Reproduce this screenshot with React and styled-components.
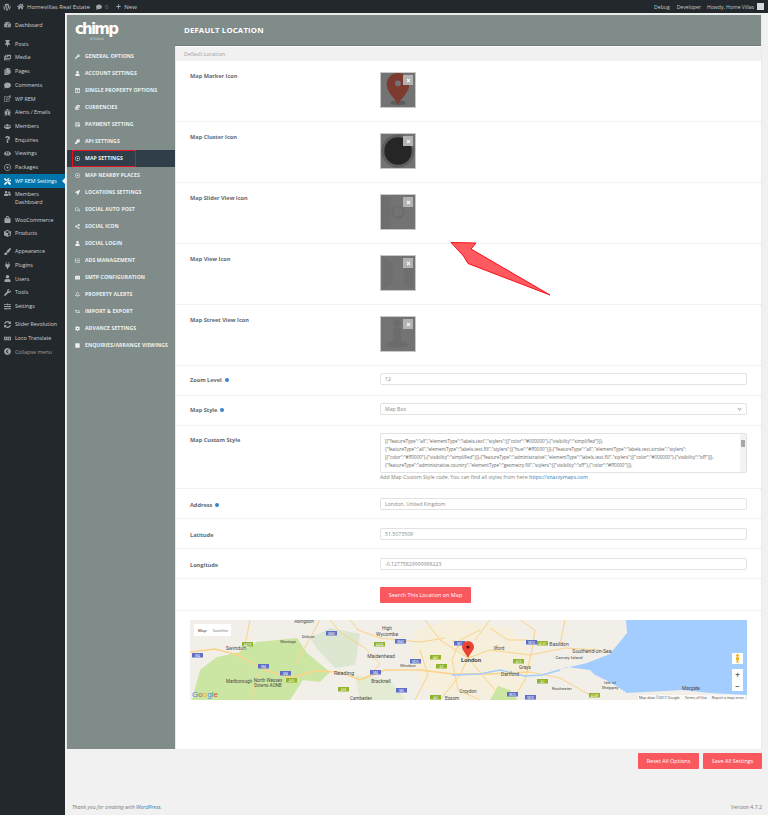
import React from 'react';
import styled, { createGlobalStyle } from 'styled-components';
import {
  FaWordpress, FaHome, FaComment, FaPlus, FaTachometerAlt, FaThumbtack, FaImages, FaCopy,
  FaRegEdit, FaBug, FaUsers, FaQuestion, FaEye, FaRegDotCircle, FaTools, FaUserFriends,
  FaShoppingBag, FaCube, FaPaintBrush, FaPlug, FaUser, FaWrench, FaSlidersH, FaSyncAlt,
  FaLanguage, FaChevronCircleLeft, FaKey, FaColumns, FaCoins, FaSquare, FaCog,
  FaLocationArrow, FaRegComments, FaShareAlt, FaList, FaEnvelope, FaRegBell, FaRetweet, FaCreditCard, FaTimes,
} from 'react-icons/fa';

const GlobalStyle = createGlobalStyle`
  html, body { margin: 0; padding: 0; background: #f1f1f1; }
  body { font-family: "Open Sans", "Liberation Sans", sans-serif; overflow: hidden; }
  * { box-sizing: border-box; }
`;

const Page = styled.div`
  position: relative;
  width: 768px;
  height: 815px;
  overflow: hidden;
`;

const AdminBar = styled.header`
  display: flex;
  align-items: center;
  height: 13px;
  padding: 0 4px 0 3px;
  background: #23282d;
  color: #c6c9cb;
  font-size: 6px;
`;

const BarItem = styled.span`
  display: flex;
  align-items: center;
  gap: 3px;
  margin-left: ${p => p.$gap || 0}px;
  svg { color: #a0a5aa; }
`;

const BarCount = styled.span`
  opacity: 0.5;
`;

const BarRight = styled.div`
  display: flex;
  align-items: center;
  margin-left: auto;
  font-size: 5.1px;
`;

const Avatar = styled.span`
  width: 7px;
  height: 7px;
  margin-left: 0;
  background: #d8d8d8;
`;

const Shell = styled.div`
  display: flex;
  height: 802px;
`;

const Sidebar = styled.nav`
  flex: 0 0 65px;
  padding-top: 5px;
  background: #23282d;
`;

const SideItem = styled.div`
  position: relative;
  display: flex;
  align-items: ${p => (p.$tall ? 'flex-start' : 'center')};
  gap: 4px;
  height: ${p => (p.$tall ? 20 : 13.72)}px;
  margin-top: ${p => p.$top || 0}px;
  padding: ${p => (p.$tall ? '2px' : 0)} 0 0 4px;
  background: ${p => (p.$active ? '#0073aa' : 'transparent')};
  color: ${p => (p.$active ? '#fff' : p.$dim ? '#9a9fa4' : '#d0d2d4')};
  font-size: 5.35px;
  line-height: 8.5px;
  svg { flex: 0 0 7px; color: ${p => (p.$active ? '#fff' : '#a0a5aa')}; }
`;

const SideNotch = styled.span`
  position: absolute;
  right: 0;
  top: 3.5px;
  border: 3.5px solid transparent;
  border-right-color: #f1f1f1;
  border-left: 0;
`;

const Main = styled.main`
  flex: 1;
  display: flex;
  flex-direction: column;
  padding: 0 6px 0 1px;
`;

const Panel = styled.div`
  display: flex;
  height: 736px;
  padding: 2px 1px 0;
  background: #e9eaea;
`;

const OptionsNav = styled.aside`
  flex: 0 0 108px;
  margin-right: 1px;
  background: #7f8c8a;
`;

const LogoBox = styled.div`
  position: relative;
  height: 32px;
  padding: 8px 0 0 8px;
  color: #fff;
  font-family: "DejaVu Sans", sans-serif;
  font-size: 15px;
  font-weight: 700;
  line-height: 13px;
  letter-spacing: -1.8px;
  small {
    position: absolute;
    left: 23px;
    top: 21.5px;
    color: #dfe4e3;
    font-size: 3px;
    font-weight: 400;
    line-height: 4px;
    letter-spacing: 0.4px;
  }
`;

const NavItem = styled.div`
  position: relative;
  display: flex;
  align-items: center;
  gap: 5px;
  height: 17px;
  padding-left: 8px;
  background: ${p => (p.$active ? '#2f3e48' : 'transparent')};
  color: #eff2f1;
  font-size: 5.1px;
  font-weight: 700;
  letter-spacing: 0.1px;
  text-transform: uppercase;
  svg { flex: 0 0 5px; }
`;

const NavList = styled.div`
  padding-top: 0.5px;
`;

const RedBox = styled.span`
  position: absolute;
  left: 5px;
  top: 0;
  width: 64px;
  height: 17px;
  border: 1.5px solid #e8101c;
`;

const Content = styled.section`
  flex: 1;
  min-width: 0;
  display: flex;
  flex-direction: column;
  background: #fff;
`;

const Header = styled.div`
  display: flex;
  align-items: center;
  height: 31px;
  margin-left: -1px;
  padding-left: 9px;
  background: #7f8c8a;
  border-bottom: 1px solid #6f7b79;
  color: #fff;
  font-size: 7.8px;
  font-weight: 700;
  letter-spacing: 0.15px;
`;

const Crumb = styled.div`
  display: flex;
  align-items: center;
  height: 14px;
  margin-top: 1px;
  padding-left: 8px;
  background: #f1f1f1;
  color: #a0a0a0;
  font-size: 5.4px;
`;

const Row = styled.div`
  display: grid;
  grid-template-columns: 190px 367px;
  height: ${p => p.$h}px;
  padding: ${p => p.$pt}px 0 0 14px;
  border-bottom: 1px dotted #e8e8e8;
`;

const Label = styled.label`
  display: flex;
  align-items: flex-start;
  gap: 2px;
  padding-top: ${p => p.$pt || 0}px;
  color: #66696c;
  font-size: 5.6px;
  line-height: 8px;
  font-weight: 700;
`;

const Help = styled.span`
  width: 4px;
  height: 4px;
  margin: 2px 0 0 1px;
  border-radius: 50%;
  background: #3d82c4;
`;

const IconThumb = styled.div`
  position: relative;
  width: 36px;
  height: 36px;
  overflow: hidden;
  border: 1px solid #c9c9c9;
  background: #737373;
  svg.art { display: block; width: 100%; height: 100%; }
`;

const RemoveBtn = styled.span`
  position: absolute;
  top: 2px;
  right: 2px;
  display: flex;
  align-items: center;
  justify-content: center;
  width: 10px;
  height: 10px;
  background: #b3b3b3;
  color: #fff;
`;

const Input = styled.div`
  display: flex;
  align-items: center;
  justify-content: space-between;
  height: 12px;
  padding: 0 5px 0 4px;
  border: 1px solid #e2e2e2;
  border-radius: 2px;
  color: #8a8a8a;
  font-size: 5.2px;
`;

const Chevron = styled.span`
  width: 3px;
  height: 3px;
  margin-top: -2px;
  border-right: 1px solid #aaa;
  border-bottom: 1px solid #aaa;
  transform: rotate(45deg);
`;

const TextBox = styled.div`
  position: relative;
  height: 40px;
  overflow: hidden;
  padding: 3px 8px 0 4px;
  border: 1px solid #e2e2e2;
  border-radius: 2px;
  color: #666;
  font-size: 4.55px;
  line-height: 8px;
  white-space: nowrap;
`;

const FakeScroll = styled.div`
  position: absolute;
  top: 0;
  right: 0;
  bottom: 0;
  width: 6px;
  background: #f3f3f3;
  &::before {
    content: '';
    position: absolute;
    top: 6px;
    left: 1px;
    width: 4px;
    height: 7px;
    background: #a6a6a6;
  }
`;

const Hint = styled.div`
  margin-top: 0;
  color: #808080;
  font-size: 5.2px;
  line-height: 8px;
  a { color: #2b7cba; text-decoration: none; }
`;

const PrimaryButton = styled.button`
  flex: none;
  height: 16px;
  width: ${p => p.$w}px;
  padding: 0;
  border: 0;
  border-radius: 1px;
  background: #f9585e;
  color: #fff;
  font-family: inherit;
  font-size: 5.5px;
  font-weight: 400;
`;

const ButtonRow = styled.div`
  display: flex;
  height: 32px;
  padding: 8px 0 0 204px;
  border-bottom: 1px dotted #e8e8e8;
`;

const MapWrap = styled.div`
  position: relative;
  width: 557px;
  height: 80px;
  margin: 9px 0 0 14px;
  overflow: hidden;
  svg.map { display: block; }
`;

const MapType = styled.div`
  position: absolute;
  top: 4px;
  left: 4px;
  display: flex;
  align-items: center;
  gap: 6px;
  height: 12px;
  padding: 0 3px 0 4px;
  background: #fff;
  color: #777;
  font-size: 4.2px;
  b { color: #222; font-weight: 400; }
`;

const Pegman = styled.div`
  position: absolute;
  top: 33px;
  right: 4px;
  display: flex;
  justify-content: center;
  align-items: center;
  width: 11px;
  height: 11px;
  background: #fff;
`;

const ZoomControl = styled.div`
  position: absolute;
  top: 49px;
  right: 4px;
  display: flex;
  flex-direction: column;
  width: 11px;
  height: 22px;
  background: #fff;
  color: #666;
  font-size: 8px;
  font-weight: 700;
  line-height: 11px;
  text-align: center;
`;

const Attribution = styled.div`
  position: absolute;
  right: 2px;
  bottom: 0;
  display: flex;
  gap: 5px;
  padding: 0 1px;
  background: rgba(255, 255, 255, 0.7);
  color: #444;
  font-size: 3.6px;
  line-height: 5px;
`;

const GoogleMark = styled.div`
  position: absolute;
  left: 2px;
  bottom: 1px;
  font-family: "Liberation Sans", sans-serif;
  font-size: 8px;
  line-height: 9px;
  span:nth-child(1), span:nth-child(4) { color: #4a8af4; }
  span:nth-child(2), span:nth-child(6) { color: #e8453c; }
  span:nth-child(3) { color: #f5b400; }
  span:nth-child(5) { color: #34a853; }
`;

const Actions = styled.div`
  display: flex;
  justify-content: flex-end;
  gap: 4px;
  padding-top: 4px;
`;

const Footer = styled.footer`
  display: flex;
  justify-content: space-between;
  margin-top: 34px;
  padding-left: 6px;
  color: #777;
  font-size: 5.2px;
  font-style: italic;
  line-height: 8px;
  a { color: #2b7cba; text-decoration: none; }
  span { font-style: normal; }
`;

const ArrowMark = styled.svg`
  position: absolute;
  left: 445px;
  top: 236px;
`;

const sideItems = [
  { label: 'Dashboard', icon: FaTachometerAlt },
  { label: 'Posts', icon: FaThumbtack, top: 5.3 },
  { label: 'Media', icon: FaImages },
  { label: 'Pages', icon: FaCopy },
  { label: 'Comments', icon: FaComment },
  { label: 'WP REM', icon: FaRegEdit },
  { label: 'Alerts / Emails', icon: FaBug },
  { label: 'Members', icon: FaUsers },
  { label: 'Enquiries', icon: FaQuestion },
  { label: 'Viewings', icon: FaEye },
  { label: 'Packages', icon: FaRegDotCircle },
  { label: 'WP REM Settings', icon: FaTools, active: true },
  { label: <>Members<br />Dashboard</>, icon: FaUserFriends, tall: true },
  { label: 'WooCommerce', icon: FaShoppingBag, top: 5 },
  { label: 'Products', icon: FaCube },
  { label: 'Appearance', icon: FaPaintBrush, top: 4.3 },
  { label: 'Plugins', icon: FaPlug },
  { label: 'Users', icon: FaUser },
  { label: 'Tools', icon: FaWrench },
  { label: 'Settings', icon: FaSlidersH },
  { label: 'Slider Revolution', icon: FaSyncAlt, top: 4.3 },
  { label: 'Loco Translate', icon: FaLanguage },
  { label: 'Collapse menu', icon: FaChevronCircleLeft, dim: true },
];

const navItems = [
  ['General Options', FaWrench],
  ['Account Settings', FaUser],
  ['Single Property Options', FaColumns],
  ['Currencies', FaCoins],
  ['Payment Setting', FaCreditCard],
  ['API Settings', FaKey],
  ['Map Settings', FaRegDotCircle, true],
  ['Map Nearby Places', FaRegDotCircle],
  ['Locations Settings', FaLocationArrow],
  ['Social Auto Post', FaRegComments],
  ['Social Icon', FaShareAlt],
  ['Social Login', FaUser],
  ['Ads Management', FaList],
  ['SMTP Configuration', FaEnvelope],
  ['Property Alerts', FaRegBell],
  ['Import & Export', FaRetweet],
  ['Advance Settings', FaCog],
  ['Enquiries/Arrange Viewings', FaSquare],
];

const styleLines = [
  '[{"featureType":"all","elementType":"labels.text","stylers":[{"color":"#000000"},{"visibility":"simplified"}]},',
  '{"featureType":"all","elementType":"labels.text.fill","stylers":[{"hue":"#ff0000"}]},{"featureType":"all","elementType":"labels.text.stroke","stylers":',
  '[{"color":"#ff0000"},{"visibility":"simplified"}]},{"featureType":"administrative","elementType":"labels.text.fill","stylers":[{"color":"#000000"},{"visibility":"off"}]},',
  '{"featureType":"administrative.country","elementType":"geometry.fill","stylers":[{"visibility":"off"},{"color":"#ff0000"}]},',
];

const thumbArt = {
  marker: (
    <svg className="art" viewBox="0 0 36 36">
      <ellipse cx="18" cy="31.5" rx="8" ry="2.5" fill="#5d5d5d" />
      <path d="M18 33 C13 25 6 20 6 12 A12 12 0 0 1 30 12 C30 20 23 25 18 33Z" fill="#7d3a2e" />
      <circle cx="18" cy="11" r="3" fill="#757575" />
    </svg>
  ),
  cluster: (
    <svg className="art" viewBox="0 0 36 36">
      <circle cx="18" cy="18" r="17.5" fill="#5e5e5e" />
      <circle cx="18" cy="18" r="14.5" fill="#262626" />
    </svg>
  ),
  slider: (
    <svg className="art" viewBox="0 0 36 36">
      <path d="M0 2 H10 V36 H0Z" fill="#6e6e6e" />
      <circle cx="18" cy="18" r="6" fill="none" stroke="#6a6a6a" strokeWidth="1.5" />
    </svg>
  ),
  view: (
    <svg className="art" viewBox="0 0 36 36">
      <path d="M2 2 L12 6 V30 L2 34Z M24 6 L34 2 V34 L24 30Z" fill="#6e6e6e" />
    </svg>
  ),
  street: (
    <svg className="art" viewBox="0 0 36 36">
      <circle cx="17" cy="7" r="4" fill="#6c6c6c" />
      <path d="M13 12 H21 V26 H13Z" fill="#6c6c6c" />
      <ellipse cx="17" cy="29" rx="12" ry="3.5" fill="#6b6b6b" />
    </svg>
  ),
};

const iconRows = [
  ['Map Marker Icon', 'marker'],
  ['Map Cluster Icon', 'cluster'],
  ['Map Slider View Icon', 'slider'],
  ['Map View Icon', 'view'],
  ['Map Street View Icon', 'street'],
];

const mapLabels = [
  ['Abingdon', 114, 3, 4.6], ['Didcot', 118, 18, 4.4], ['High', 197, 10, 4.8], ['Wycombe', 197, 16, 5],
  ['Wantage', 98, 23, 4.1], ['Swindon', 46, 30, 5.4], ['Maidenhead', 191, 38, 5], ['Windsor', 218, 47, 4.4],
  ['Reading', 154, 55, 5.6], ['Bracknell', 191, 63, 4.8], ['Marlborough', 49, 63, 4.6],
  ['North Wessex', 78, 62, 4.6], ['Downs AONB', 78, 67, 4.6], ['London', 281, 42, 6, true],
  ['Ilford', 309, 30, 4.6], ['Basildon', 369, 26, 5], ['Southend-on-Sea', 402, 33, 5.2],
  ['Canvey Island', 379, 39, 4.4], ['Grays', 335, 49, 4.8], ['Dartford', 320, 56, 4.8],
  ['Rochester', 372, 70, 4.4], ['Isle of', 420, 64, 4.4], ['Sheppey', 420, 69, 4.4], ['Margate', 501, 70, 4.8],
  ['Croydon', 278, 73, 4.6], ['Camberley', 171, 79.5, 4.6], ['Epsom', 262, 79.5, 4.6],
];

const badges = [
  [136, 11, 'M40', '#5f70c4'], [52, 22, 'A419', '#90b42e'], [2, 33, 'M4', '#5f70c4'], [184, 22, 'A404', '#90b42e'],
  [205, 19, 'M40', '#5f70c4'], [264, 21, 'M1', '#5f70c4'], [240, 35, 'A41', '#90b42e'], [220, 39, 'M25', '#5f70c4'],
  [68, 44, 'M4', '#5f70c4'], [90, 51, 'M4', '#5f70c4'], [96, 58, 'A33', '#90b42e'], [180, 50, 'M4', '#5f70c4'],
  [148, 67, 'A33', '#90b42e'], [206, 68, 'M3', '#5f70c4'], [246, 44, 'A2', '#90b42e'], [336, 20, 'M25', '#5f70c4'],
  [347, 21, 'A127', '#90b42e'], [323, 39, 'A13', '#90b42e'], [347, 59, 'A2', '#90b42e'], [317, 72, 'M25', '#5f70c4'],
  [335, 75, 'M20', '#5f70c4'], [399, 73, 'A249', '#90b42e'], [240, 75, 'A3', '#90b42e'],
];

const roads = [
  'M0 32 L25 29 L48 35 L75 50 L100 58 L125 51 L150 52 L170 60 L195 50 L230 50 L262 54 L300 54 L340 52',
  'M60 0 L55 25 L48 35',
  'M140 0 L150 12 L175 28 L190 44 L180 55 L170 60',
  'M160 0 L168 10 L190 18 L230 22 L255 18',
  'M290 10 L270 20 L262 40 L268 70 L290 80',
  'M330 0 L345 10 L342 30 L335 60 L322 80',
  'M300 30 L340 35 L375 28 L410 30',
  'M340 52 L370 58 L400 75',
  'M230 30 L238 55 L225 80',
  'M300 8 L318 20 L338 20',
  'M60 80 L70 52 M130 0 L120 18 L105 45',
  'M235 0 L250 20 L278 38 L300 30 M250 80 L270 55 L278 38 L262 20 M278 38 L305 70',
  'M375 0 L370 25 M300 0 L285 20',
];

function MapPicture() {
  return (
    <svg className="map" width="557" height="80" viewBox="0 0 557 80" fontFamily="Roboto, sans-serif">
      <rect width="557" height="80" fill="#f2efe8" />
      <path d="M2 80 L10 50 L27 37 L50 32 L67 22 L107 18 L117 33 L140 52 L130 62 L113 60 L100 80Z" fill="#cbe6a3" />
      <path d="M120 18 L140 8 L170 14 L165 45 L145 48 L128 30Z" fill="#dce6d1" />
      <path d="M225 10 L260 0 L320 8 L345 40 L330 75 L280 80 L235 70 L222 40Z" fill="#f5efdb" />
      <path d="M165 55 L200 60 L215 80 H170Z" fill="#e3ecd3" />
      <path d="M300 80 L308 66 L320 70 L328 80Z" fill="#cbe6a3" />
      {roads.map((d, i) => (
        <path key={i} d={d} fill="none" stroke="#fbd38a" strokeWidth={i === 0 ? 1.5 : 1} />
      ))}
      <path d="M262 55 L290 54 L310 50 L335 56 L352 55 L370 50" fill="none" stroke="#a3ccff" strokeWidth="1.4" />
      <path d="M436 0 H557 V75 L520 73 L493 70 L437 73 L420 62 L405 55 L400 50 L377 47 L352 55 L367 50 L397 43 L420 34 L437 13Z" fill="#a3ccff" />
      {badges.map(([x, y, t, c], i) => (
        <g key={i}>
          <rect x={x} y={y} width="11" height="4.5" fill={c} />
          <text x={x + 5.5} y={y + 3.6} fontSize="3.2" fill="#fff" textAnchor="middle">{t}</text>
        </g>
      ))}
      {mapLabels.map(([t, x, y, s, bold], i) => (
        <text key={i} x={x} y={y} fontSize={s} fill="#4a4a48" fontWeight={bold ? 700 : 400} textAnchor="middle">{t}</text>
      ))}
      <path d="M278 38 C275 32 272 30 272 27 A6 6 0 0 1 284 27 C284 30 281 32 278 38Z" fill="#ea4335" />
      <circle cx="278" cy="27" r="1.6" fill="#5a1310" />
    </svg>
  );
}

export default function App() {
  return (
    <Page>
      <GlobalStyle />
      <AdminBar>
        <BarItem><FaWordpress size={8} /></BarItem>
        <BarItem $gap={6}><FaHome size={7} />Homevillas Real Estate</BarItem>
        <BarItem $gap={6}><FaComment size={6} /><BarCount>0</BarCount></BarItem>
        <BarItem $gap={8}><FaPlus size={5} />New</BarItem>
        <BarRight>
          <BarItem>Debug</BarItem>
          <BarItem $gap={7}>Developer</BarItem>
          <BarItem $gap={6}>Howdy, Home Villas<Avatar /></BarItem>
        </BarRight>
      </AdminBar>
      <Shell>
        <Sidebar>
          {sideItems.map((item, i) => {
            const Icon = item.icon;
            return (
              <SideItem key={i} $top={item.top} $active={item.active} $tall={item.tall} $dim={item.dim}>
                <Icon size={7} />
                <span>{item.label}</span>
                {item.active && <SideNotch />}
              </SideItem>
            );
          })}
        </Sidebar>
        <Main>
          <Panel>
            <OptionsNav>
              <LogoBox>chimp<small>STUDIO</small></LogoBox>
              <NavList>
                {navItems.map(([label, Icon, active]) => (
                  <NavItem key={label} $active={active}>
                    <Icon size={5} />
                    {label}
                    {active && <RedBox />}
                  </NavItem>
                ))}
              </NavList>
            </OptionsNav>
            <Content>
              <Header>DEFAULT LOCATION</Header>
              <Crumb>Default Location</Crumb>
              {iconRows.map(([label, art]) => (
                <Row key={art} $h={61} $pt={11}>
                  <Label>{label}</Label>
                  <IconThumb>
                    {thumbArt[art]}
                    <RemoveBtn><FaTimes size={5} /></RemoveBtn>
                  </IconThumb>
                </Row>
              ))}
              <Row $h={30} $pt={7}>
                <Label $pt={3}>Zoom Level<Help /></Label>
                <Input>12</Input>
              </Row>
              <Row $h={30} $pt={7}>
                <Label $pt={3}>Map Style<Help /></Label>
                <Input>Map Box<Chevron /></Input>
              </Row>
              <Row $h={63} $pt={7}>
                <Label $pt={3}>Map Custom Style</Label>
                <div>
                  <TextBox>
                    {styleLines.map(line => <div key={line}>{line}</div>)}
                    <FakeScroll />
                  </TextBox>
                  <Hint>Add Map Custom Style code. You can find all styles from here <a href="#snazzy">https://snazzymaps.com</a></Hint>
                </div>
              </Row>
              <Row $h={30} $pt={9}>
                <Label $pt={3}>Address<Help /></Label>
                <Input>London, United Kingdom</Input>
              </Row>
              <Row $h={30} $pt={9}>
                <Label $pt={3}>Latitude</Label>
                <Input>51.5073509</Input>
              </Row>
              <Row $h={30} $pt={9}>
                <Label $pt={3}>Longitude</Label>
                <Input>-0.12775829999998223</Input>
              </Row>
              <ButtonRow>
                <PrimaryButton $w={91}>Search This Location on Map</PrimaryButton>
              </ButtonRow>
              <MapWrap>
                <MapPicture />
                <MapType><b>Map</b>Satellite</MapType>
                <Pegman>
                  <svg width="5" height="9" viewBox="0 0 5 9">
                    <circle cx="2.5" cy="1.5" r="1.4" fill="#f2b01e" />
                    <path d="M1 3.2 H4 V6 H3.4 V9 H1.6 V6 H1Z" fill="#f2b01e" />
                  </svg>
                </Pegman>
                <ZoomControl><span>+</span><span>−</span></ZoomControl>
                <Attribution><span>Map data ©2017 Google</span><span>Terms of Use</span><span>Report a map error</span></Attribution>
                <GoogleMark><span>G</span><span>o</span><span>o</span><span>g</span><span>l</span><span>e</span></GoogleMark>
              </MapWrap>
            </Content>
          </Panel>
          <Actions>
            <PrimaryButton $w={61}>Reset All Options</PrimaryButton>
            <PrimaryButton $w={59}>Save All Settings</PrimaryButton>
          </Actions>
          <Footer>
            <div>Thank you for creating with <a href="#wp">WordPress</a>.</div>
            <span>Version 4.7.2</span>
          </Footer>
        </Main>
      </Shell>
      <ArrowMark width="112" height="66" viewBox="0 0 112 66">
        <path d="M6 6.5 L31 7 L26 13 L105 59 L23 27.5 L18.5 20Z" fill="#ff5a5f" stroke="#f5101c" strokeWidth="1" />
      </ArrowMark>
    </Page>
  );
}
